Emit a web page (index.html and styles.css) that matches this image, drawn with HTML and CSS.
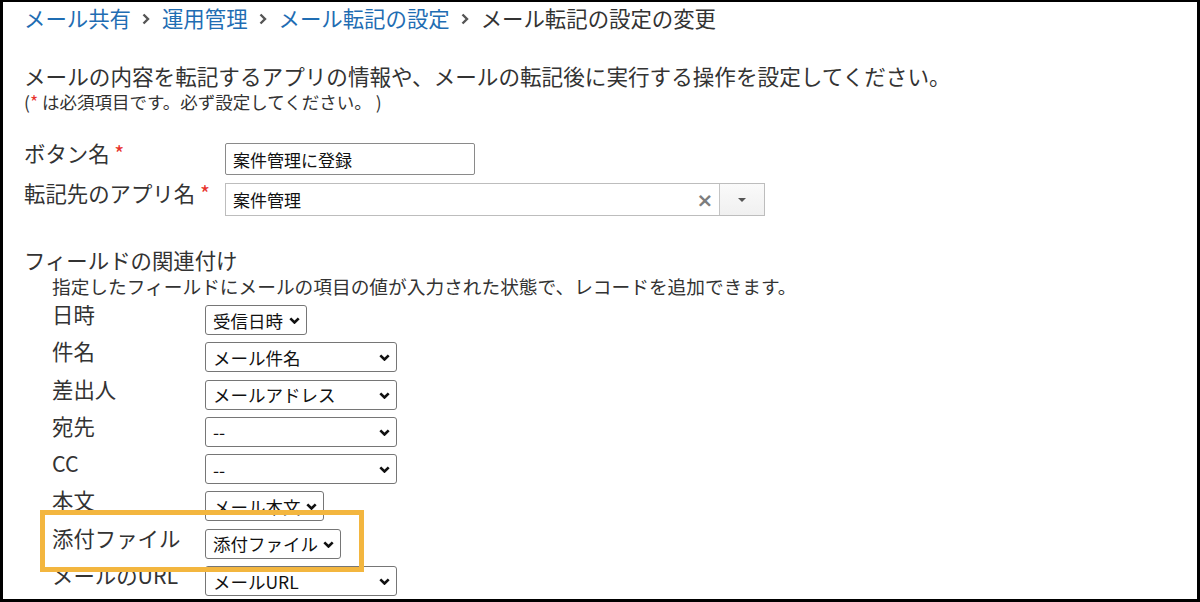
FILE: index.html
```html
<!DOCTYPE html>
<html lang="ja">

<head>
  <meta charset="UTF-8">
  <meta name="viewport" content="width=device-width, initial-scale=1.0">
  <title>メール転記の設定の変更</title>
  <link rel="stylesheet" href="styles.css">
</head>

<body>
  <div class="frame">
    <!-- パンくず -->
    <nav class="breadcrumb">
      <a href="#" class="crumb">メール共有</a>
      <svg class="crumb-sep" width="8" height="12" viewBox="0 0 8 12"><polyline points="1.5,1.5 6,6 1.5,10.5" /></svg>
      <a href="#" class="crumb">運用管理</a>
      <svg class="crumb-sep" width="8" height="12" viewBox="0 0 8 12"><polyline points="1.5,1.5 6,6 1.5,10.5" /></svg>
      <a href="#" class="crumb">メール転記の設定</a>
      <svg class="crumb-sep" width="8" height="12" viewBox="0 0 8 12"><polyline points="1.5,1.5 6,6 1.5,10.5" /></svg>
      <span class="crumb current">メール転記の設定の変更</span>
    </nav>

    <p class="lead">メールの内容を転記するアプリの情報や、メールの転記後に実行する操作を設定してください。</p>
    <p class="note">(<span class="req">*</span> は必須項目です。必ず設定してください。 )</p>

    <!-- 基本設定 -->
    <div class="form-row first">
      <label class="form-label">ボタン名 <span class="req">*</span></label>
      <input type="text" class="text-input" value="案件管理に登録">
    </div>
    <div class="form-row">
      <label class="form-label">転記先のアプリ名 <span class="req">*</span></label>
      <div class="app-select">
        <span class="app-select-value">案件管理</span>
        <span class="app-select-clear">&times;</span>
        <span class="app-select-arrow"><span class="tri"></span></span>
      </div>
    </div>

    <!-- フィールドの関連付け -->
    <h3 class="section-title">フィールドの関連付け</h3>
    <p class="help">指定したフィールドにメールの項目の値が入力された状態で、レコードを追加できます。</p>

    <div class="field-list">
      <div class="field-row">
        <span class="field-label">日時</span>
        <span class="select-wrap w-date">
          <select class="field-select"><option>受信日時</option></select>
          <svg class="chev" width="11" height="7" viewBox="0 0 11 7"><polyline points="1.3,1.3 5.5,5.5 9.7,1.3" /></svg>
        </span>
      </div>
      <div class="field-row">
        <span class="field-label">件名</span>
        <span class="select-wrap w-wide">
          <select class="field-select"><option>メール件名</option></select>
          <svg class="chev" width="11" height="7" viewBox="0 0 11 7"><polyline points="1.3,1.3 5.5,5.5 9.7,1.3" /></svg>
        </span>
      </div>
      <div class="field-row">
        <span class="field-label">差出人</span>
        <span class="select-wrap w-wide">
          <select class="field-select"><option>メールアドレス</option></select>
          <svg class="chev" width="11" height="7" viewBox="0 0 11 7"><polyline points="1.3,1.3 5.5,5.5 9.7,1.3" /></svg>
        </span>
      </div>
      <div class="field-row">
        <span class="field-label">宛先</span>
        <span class="select-wrap w-wide">
          <select class="field-select"><option>--</option></select>
          <svg class="chev" width="11" height="7" viewBox="0 0 11 7"><polyline points="1.3,1.3 5.5,5.5 9.7,1.3" /></svg>
        </span>
      </div>
      <div class="field-row">
        <span class="field-label">CC</span>
        <span class="select-wrap w-wide">
          <select class="field-select"><option>--</option></select>
          <svg class="chev" width="11" height="7" viewBox="0 0 11 7"><polyline points="1.3,1.3 5.5,5.5 9.7,1.3" /></svg>
        </span>
      </div>
      <div class="field-row">
        <span class="field-label">本文</span>
        <span class="select-wrap w-body">
          <select class="field-select"><option>メール本文</option></select>
          <svg class="chev" width="11" height="7" viewBox="0 0 11 7"><polyline points="1.3,1.3 5.5,5.5 9.7,1.3" /></svg>
        </span>
      </div>
      <div class="field-row">
        <span class="field-label">添付ファイル</span>
        <span class="select-wrap w-file">
          <select class="field-select"><option>添付ファイル</option></select>
          <svg class="chev" width="11" height="7" viewBox="0 0 11 7"><polyline points="1.3,1.3 5.5,5.5 9.7,1.3" /></svg>
        </span>
      </div>
      <div class="field-row">
        <span class="field-label">メールのURL</span>
        <span class="select-wrap w-wide">
          <select class="field-select"><option>メールURL</option></select>
          <svg class="chev" width="11" height="7" viewBox="0 0 11 7"><polyline points="1.3,1.3 5.5,5.5 9.7,1.3" /></svg>
        </span>
      </div>
    </div>

    <!-- 強調枠 -->
    <div class="highlight"></div>
  </div>
</body>

</html>
```

FILE: styles.css
```css
/* 全体 */
html,
body {
  margin: 0;
  background: #000;
}

body {
  font-family: "Noto Sans CJK JP", "Noto Sans", sans-serif;
  color: #333;
}

.frame {
  position: relative;
  box-sizing: border-box;
  height: 597px;
  margin: 2px 3px 3px 3px;
  padding: 4px 0 0 21px;
  background: #fff;
  overflow: hidden;
}

/* パンくず */
.breadcrumb {
  display: flex;
  align-items: center;
  font-size: 21.4px;
  line-height: 24px;
  height: 24px;
  white-space: nowrap;
}

.crumb {
  color: #1f6db3;
  text-decoration: none;
}

.crumb.current {
  color: #333;
}

.crumb-sep {
  margin: 2px 12px 0 11px;
  fill: none;
  stroke: #555;
  stroke-width: 2.4;
}

/* 説明文 */
.lead {
  margin: 33px 0 0;
  font-size: 21.6px;
  line-height: 26px;
  white-space: nowrap;
}

.note {
  margin: 3px 0 0;
  font-size: 17.5px;
  line-height: 20px;
  white-space: nowrap;
}

.req {
  color: #e8332c;
}

/* 基本設定 */
.form-row {
  display: flex;
  align-items: flex-start;
  margin-top: 6px;
}

.form-row.first {
  margin-top: 29px;
}

.form-label {
  width: 201px;
  flex-shrink: 0;
  font-size: 21.4px;
  line-height: 24px;
  white-space: nowrap;
}

.text-input {
  box-sizing: border-box;
  width: 250px;
  height: 32px;
  margin: 2px 0 0;
  padding: 0 7px;
  border: 1px solid #8a8a8a;
  border-radius: 2px;
  font-family: inherit;
  font-size: 17px;
  color: #111;
}

.app-select {
  box-sizing: border-box;
  display: flex;
  align-items: center;
  width: 540px;
  height: 33px;
  margin-top: 2px;
  border: 1px solid #bdbdbd;
  background: #fff;
}

.app-select-value {
  flex: 1;
  padding-left: 7px;
  font-size: 17px;
  color: #111;
}

.app-select-clear {
  width: 22px;
  margin-right: 3px;
  font-family: "DejaVu Sans", sans-serif;
  font-size: 20px;
  font-weight: bold;
  line-height: 20px;
  color: #7d7d7d;
  text-align: center;
}

.app-select-arrow {
  display: flex;
  align-items: center;
  justify-content: center;
  width: 44px;
  height: 100%;
  border-left: 1px solid #c4c4c4;
  background: linear-gradient(#fafafa, #f0f0f0);
}

.tri {
  width: 0;
  height: 0;
  border-left: 4px solid transparent;
  border-right: 4px solid transparent;
  border-top: 4px solid #555;
}

/* フィールドの関連付け */
.section-title {
  margin: 33px 0 0;
  font-size: 21.4px;
  font-weight: normal;
  line-height: 22px;
}

.help {
  margin: 4px 0 0 28px;
  font-size: 18.7px;
  line-height: 22px;
  white-space: nowrap;
}

.field-list {
  display: flex;
  flex-direction: column;
  gap: 4.3px;
  margin: 5px 0 0 28px;
}

.field-row {
  display: flex;
  align-items: flex-start;
}

.field-label {
  width: 153px;
  flex-shrink: 0;
  font-size: 21.4px;
  line-height: 24px;
  white-space: nowrap;
}

.select-wrap {
  position: relative;
  display: block;
  height: 30px;
  margin-top: 3px;
}

.field-select {
  appearance: none;
  -webkit-appearance: none;
  box-sizing: border-box;
  width: 100%;
  height: 30px;
  margin: 0;
  padding: 0 20px 0 7px;
  border: 1px solid #767676;
  border-radius: 3px;
  background: #fff;
  font-family: inherit;
  font-size: 17.5px;
  color: #111;
}

/* セレクトの矢印 */
.chev {
  position: absolute;
  right: 7px;
  top: 12px;
  fill: none;
  stroke: #111;
  stroke-width: 2.6;
  pointer-events: none;
}

.w-date {
  width: 102px;
}

.w-wide {
  width: 192px;
}

.w-body {
  width: 119px;
}

.w-file {
  width: 136px;
}

/* 強調枠 */
.highlight {
  position: absolute;
  left: 37px;
  top: 508px;
  box-sizing: border-box;
  width: 324px;
  height: 62px;
  border: 5px solid #f3b63f;
}
```
